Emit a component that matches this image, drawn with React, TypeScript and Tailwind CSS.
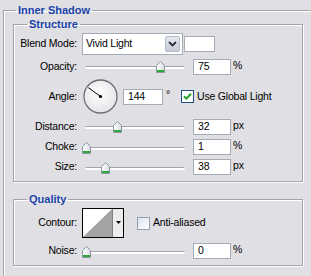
import React from "react";

// Photoshop "Layer Style > Inner Shadow" panel, XP silver look

const etched = "border border-[#a5a4a9] shadow-[inset_1px_1px_0_#fff,1px_1px_0_#fff]";

const Thumb = () => (
    <svg width="9" height="12" viewBox="0 0 9 12">
        <defs>
            <linearGradient id="tg" x1="0" y1="0" x2="1" y2="0">
                <stop offset="0" stopColor="#ffffff" />
                <stop offset="1" stopColor="#d8dce4" />
            </linearGradient>
        </defs>
        <path d="M4.5 0.5 L8.5 4.5 L8.5 11.5 L0.5 11.5 L0.5 4.5 Z" fill="url(#tg)" stroke="#8b96a3" />
        <rect x="1" y="9" width="7" height="2" fill="#2fa83a" />
    </svg>
);

const Slider = ({ pos }: { pos: number }) => (
    <div className="relative ml-[3px] mt-[2px] h-[3px] w-[100px] rounded-full border-t border-[#a4a4aa] bg-white">
        <div className="absolute top-[-6px] leading-none" style={{ left: pos - 4 }}>
            <Thumb />
        </div>
    </div>
);

const NumBox = ({ value, w = "w-[38px]" }: { value: string; w?: string }) => (
    <div className={`flex h-[16px] items-center border border-[#a5acb5] bg-white pl-[4px] ${w}`}>{value}</div>
);

const Label = ({ text }: { text: string }) => (
    <div className="w-[63px] text-right">{text}</div>
);

const Checkbox = ({ checked }: { checked: boolean }) => (
    <div
        className={`flex h-[13px] w-[13px] items-center justify-center border ${
            checked ? "border-[#1c5180] bg-white" : "border-[#8ba0b8] bg-gradient-to-br from-[#dde4ec] to-white"
        }`}
    >
        {checked && (
            <svg width="9" height="9" viewBox="0 0 9 9">
                <path d="M1 4.2 L3.4 6.6 L8 1.8" fill="none" stroke="#21a121" strokeWidth="2" />
            </svg>
        )}
    </div>
);

const Dial = ({ angle }: { angle: number }) => {
    const r = 15;
    const rad = (angle * Math.PI) / 180;
    const x = 17.5 + Math.cos(rad) * r;
    const y = 17.5 - Math.sin(rad) * r;
    return (
        <svg width="35" height="35" viewBox="0 0 35 35" className="ml-[1px]">
            <defs>
                <radialGradient id="dg" cx="0.45" cy="0.4" r="0.6">
                    <stop offset="0" stopColor="#ffffff" />
                    <stop offset="1" stopColor="#e4e4e8" />
                </radialGradient>
            </defs>
            <circle cx="17.5" cy="17.5" r="16.5" fill="url(#dg)" stroke="#6e6e72" strokeWidth="1.3" />
            <line x1="17.5" y1="17.5" x2={x} y2={y} stroke="#000" strokeWidth="1" />
            <circle cx="17.5" cy="17.5" r="1.6" fill="#000" />
        </svg>
    );
};

const SliderRow = ({ label, pos, value, unit, h }: { label: string; pos: number; value: string; unit: string; h: string }) => (
    <div className={`flex items-center ${h}`}>
        <Label text={label} />
        <div className="ml-[5px] flex items-center">
            <Slider pos={pos} />
            <div className="ml-[8px] flex items-start">
                <NumBox value={value} />
                <span className="ml-[2px] leading-[12px]">{unit}</span>
            </div>
        </div>
    </div>
);

const App = () => {
    return (
        <div className="h-[276px] w-[311px] overflow-hidden bg-[#e0dfe3] font-['Liberation_Sans',Arial,sans-serif] text-[10.5px] tracking-[-0.2px] text-black">
            <fieldset className={`ml-[3px] mt-[3px] w-[330px] pb-[20px] ${etched}`}>
                <legend className="ml-[12px] px-[2px] text-[11px] font-bold leading-[14px] tracking-normal text-[#1a44a8]">Inner Shadow</legend>

                <fieldset className={`ml-[9px] w-[290px] pb-[4px] ${etched}`}>
                    <legend className="ml-[13px] px-[2px] text-[11px] font-bold leading-[14px] tracking-normal text-[#1a44a8]">Structure</legend>

                    <div className="flex h-[25px] items-center pt-[1px]">
                        <Label text="Blend Mode:" />
                        <div className="ml-[5px] flex h-[22px] w-[101px] items-center border border-[#a5acb5] bg-white">
                            <span className="flex-1 pl-[3px]">Vivid Light</span>
                            <div className="mr-[2px] flex h-[16px] w-[15px] items-center justify-center rounded-[2px] border border-[#b4bccb] bg-gradient-to-b from-[#e6e9f0] to-[#c5cad6]">
                                <svg width="9" height="6" viewBox="0 0 9 6">
                                    <path d="M1 1 L4.5 4.5 L8 1" fill="none" stroke="#2b2f3a" strokeWidth="1.8" />
                                </svg>
                            </div>
                        </div>
                        <div className="ml-[1px] h-[16px] w-[31px] border border-[#a5acb5] bg-white" />
                    </div>

                    <SliderRow label="Opacity:" pos={75} value="75" unit="%" h="h-[21px]" />

                    <div className="flex h-[39px] items-center">
                        <Label text="Angle:" />
                        <div className="ml-[5px] flex items-center">
                            <Dial angle={144} />
                            <div className="ml-[5px] flex items-start">
                                <NumBox value="144" w="w-[40px]" />
                                <span className="ml-[3px] leading-[10px]">°</span>
                            </div>
                            <div className="ml-[11px]"><Checkbox checked /></div>
                            <span className="ml-[3px]">Use Global Light</span>
                        </div>
                    </div>

                    <SliderRow label="Distance:" pos={32} value="32" unit="px" h="h-[21px]" />
                    <SliderRow label="Choke:" pos={1} value="1" unit="%" h="h-[20px]" />
                    <SliderRow label="Size:" pos={20} value="38" unit="px" h="h-[20px]" />
                </fieldset>

                <fieldset className={`ml-[9px] mt-[10px] w-[290px] pb-[3px] ${etched}`}>
                    <legend className="ml-[13px] px-[2px] text-[11px] font-bold leading-[14px] tracking-normal text-[#1a44a8]">Quality</legend>

                    <div className="flex h-[34px] items-center">
                        <Label text="Contour:" />
                        <div className="ml-[5px] flex h-[30px] w-[42px] border border-black bg-white">
                            <svg width="29" height="28" viewBox="0 0 29 28">
                                <path d="M0 28 L29 0 L29 28 Z" fill="#a3a3a3" />
                            </svg>
                            <div className="flex flex-1 justify-center border-l border-[#808080] bg-[#ececec] pt-[12px]">
                                <svg width="5" height="3" viewBox="0 0 5 3">
                                    <path d="M0 0 L5 0 L2.5 3 Z" fill="#000" />
                                </svg>
                            </div>
                        </div>
                        <div className="ml-[13px]"><Checkbox checked={false} /></div>
                        <span className="ml-[3px]">Anti-aliased</span>
                    </div>

                    <SliderRow label="Noise:" pos={1} value="0" unit="%" h="h-[22px]" />
                </fieldset>
            </fieldset>
        </div>
    );
};

export default App;
